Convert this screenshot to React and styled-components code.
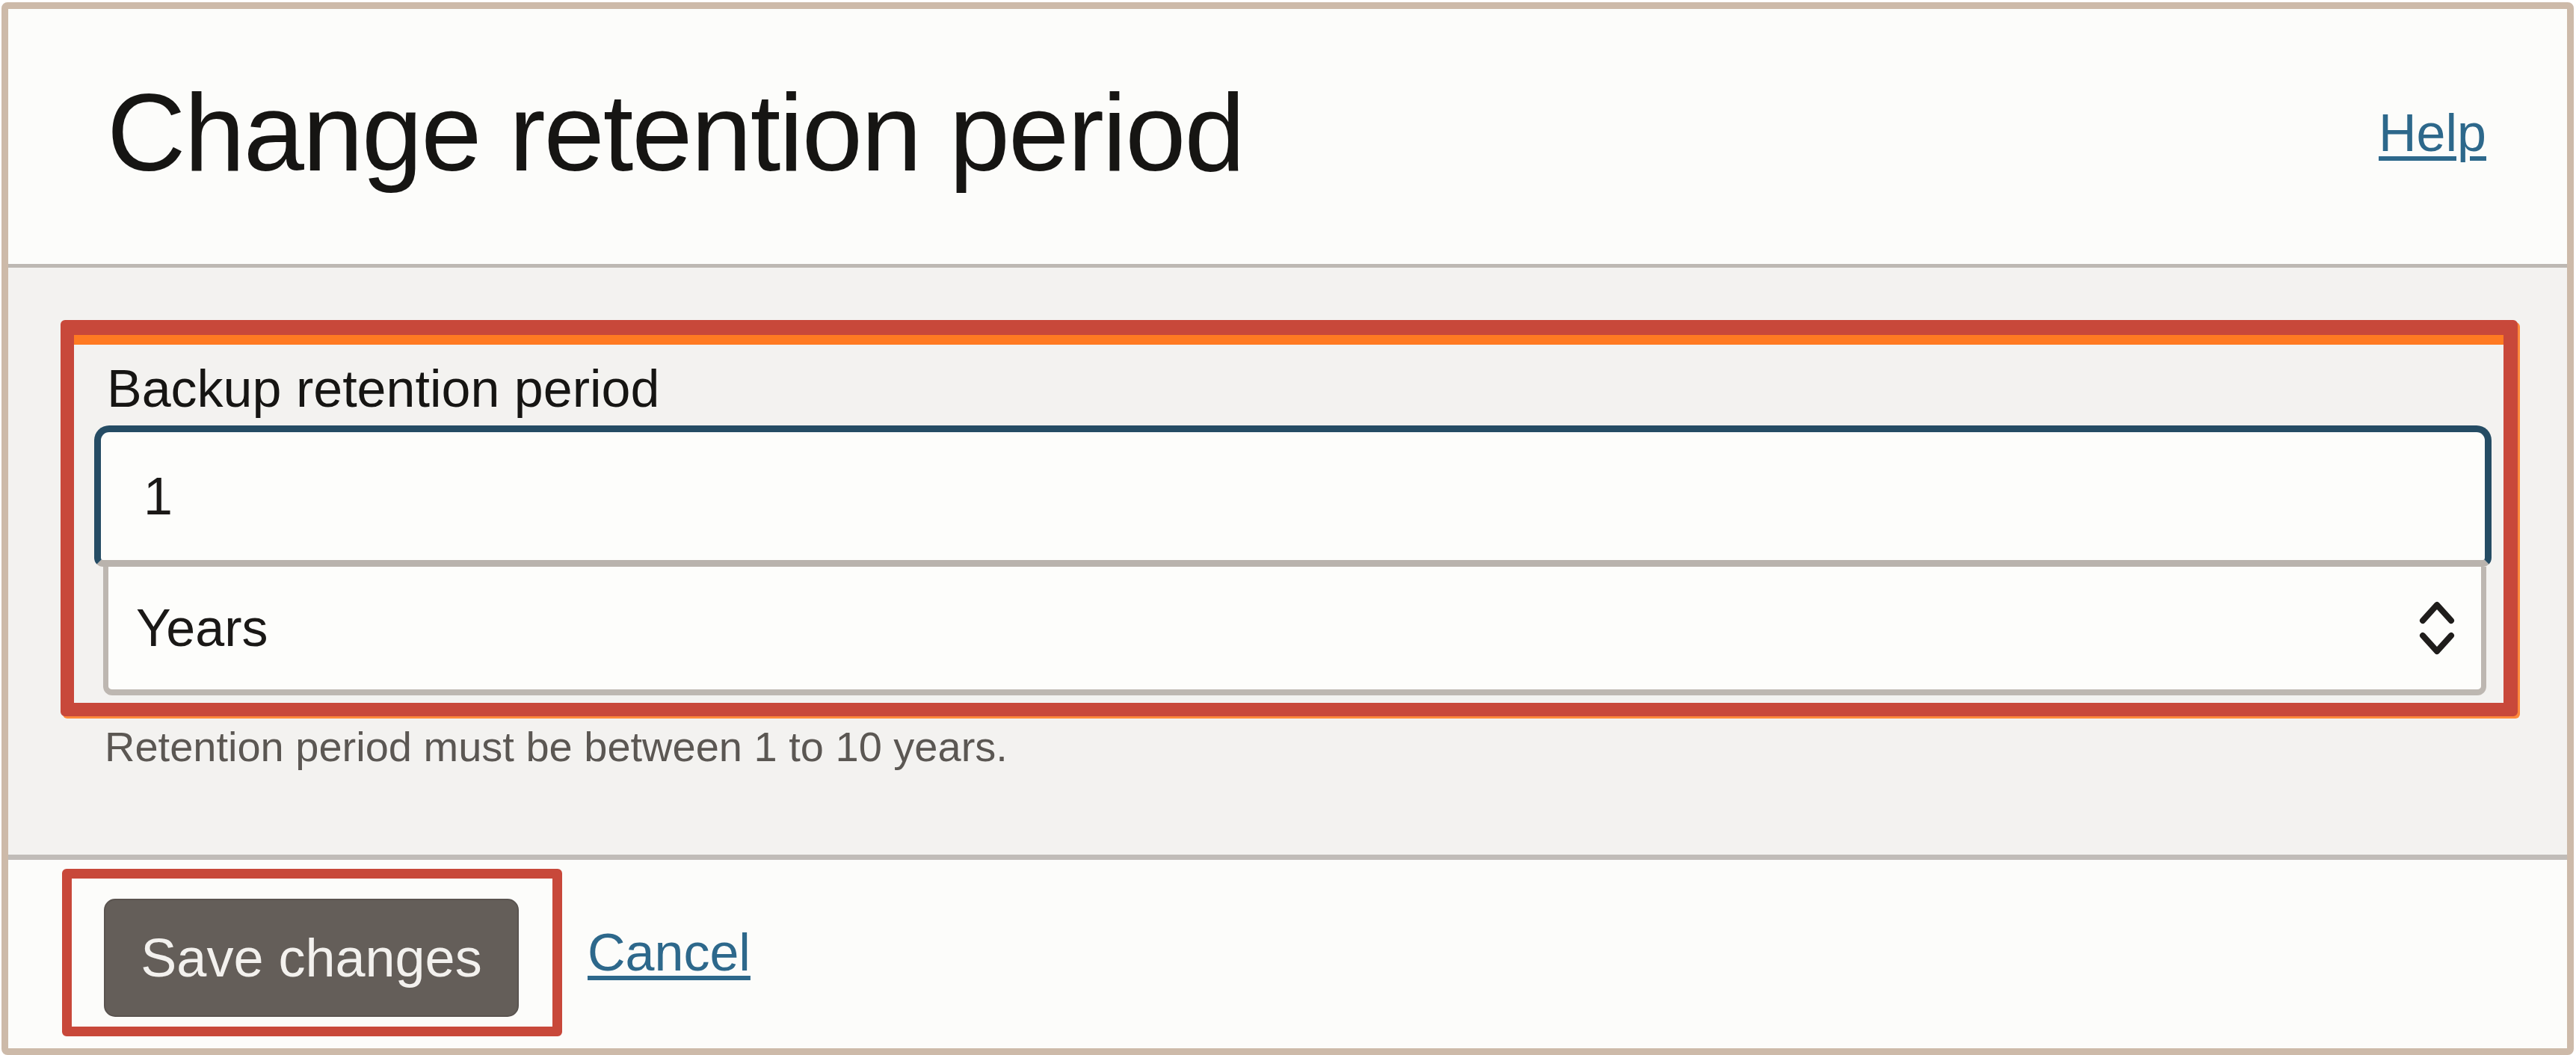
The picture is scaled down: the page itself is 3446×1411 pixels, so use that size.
import styled, { createGlobalStyle } from "styled-components";

const GlobalStyle = createGlobalStyle`
  html, body {
    margin: 0;
    padding: 0;
    background: #ffffff;
  }
  body {
    font-family: "Liberation Sans", Arial, sans-serif;
    color: #161513;
  }
`;

const Frame = styled.div`
  box-sizing: border-box;
  width: 3441px;
  height: 1408px;
  margin: 3px 0 0 2px;
  border: 9px solid #cdbaa9;
  border-radius: 8px;
  display: flex;
  flex-direction: column;
  overflow: hidden;
`;

const Header = styled.header`
  box-sizing: border-box;
  height: 346px;
  padding: 0 108px 10px 132px;
  background: #fcfcfa;
  border-bottom: 5px solid #bdb8b3;
  display: flex;
  align-items: center;
  justify-content: space-between;
`;

const Title = styled.h1`
  margin: 0;
  font-size: 146px;
  font-weight: 400;
  letter-spacing: -2px;
  line-height: 1.15;
  color: #161513;
`;

const TextLink = styled.a`
  font-size: 70px;
  color: #2d688b;
  text-decoration: underline;
  text-decoration-thickness: 6px;
  text-underline-offset: 7px;
  cursor: pointer;
`;

const Body = styled.section`
  background: #f3f2f0;
  padding: 70px 66px 109px 70px;
`;

// red annotation frame drawn round the highlighted parts
const Highlight = styled.div`
  box-sizing: border-box;
  border: ${(p) => (p.$thin ? "13px" : "18px")} solid #c8483a;
  border-top-width: ${(p) => (p.$thin ? "13px" : "20px")};
  border-right-width: ${(p) => (p.$thin ? "13px" : "19px")};
  border-radius: 6px;
  box-shadow: ${(p) =>
    p.$thin ? "none" : "inset 0 13px 0 #ff7a22, 3px 3px 0 #ff8a3c"};
  background: ${(p) => (p.$thin ? "#fcfcfa" : "#f3f2f0")};
  padding: ${(p) => p.$pad};
`;

const FieldLabel = styled.label`
  display: block;
  margin-left: 17px;
  font-size: 70px;
  line-height: 80px;
  color: #161513;
`;

const NumberInput = styled.input`
  display: block;
  box-sizing: border-box;
  width: 100%;
  height: 189px;
  margin: 9px 0 0;
  padding: 0 0 0 57px;
  border: 9px solid #254c64;
  border-bottom-color: #b9b3ad;
  border-radius: 20px 20px 12px 12px;
  background: #fdfdfb;
  font-family: "Liberation Sans", Arial, sans-serif;
  font-size: 70px;
  color: #1a1816;
  outline: none;
`;

const SelectBox = styled.div`
  box-sizing: border-box;
  height: 172px;
  margin: 0 7px 0 12px;
  padding: 0 35px 0 37px;
  border: 7px solid #bdb7b1;
  border-top: none;
  border-bottom-width: 8px;
  border-radius: 0 0 12px 12px;
  background: #fdfdfb;
  display: flex;
  align-items: center;
  justify-content: space-between;
  font-size: 70px;
  color: #1a1816;
`;

const Hint = styled.p`
  margin: 6px 0 0 59px;
  font-size: 56px;
  line-height: 70px;
  color: #5b5753;
`;

const Footer = styled.footer`
  flex: 1;
  background: #fcfcfa;
  border-top: 7px solid #c0bcb8;
  padding: 12px 0 0 72px;
  display: flex;
  align-items: flex-start;
`;

const ActionRow = styled.div`
  display: flex;
  align-items: center;
  gap: 34px;
`;

const PrimaryButton = styled.button`
  box-sizing: border-box;
  width: 555px;
  height: 158px;
  border: 2px solid #5a5450;
  border-radius: 15px;
  background: #645e59;
  color: #f3f1ee;
  font-family: "Liberation Sans", Arial, sans-serif;
  font-size: 72px;
  cursor: pointer;
`;

const Chevrons = () => (
  <svg width="48" height="80" viewBox="-4 -5 48 80" fill="none">
    <polyline
      points="1,25 20,4 39,25"
      stroke="#1f1d1b"
      strokeWidth="8"
      strokeLinecap="round"
      strokeLinejoin="round"
    />
    <polyline
      points="1,45 20,66 39,45"
      stroke="#1f1d1b"
      strokeWidth="8"
      strokeLinecap="round"
      strokeLinejoin="round"
    />
  </svg>
);

const App = () => {
  return (
    <>
      <GlobalStyle />
      <Frame>
        <Header>
          <Title>Change retention period</Title>
          <TextLink>Help</TextLink>
        </Header>
        <Body>
          <Highlight $pad="32px 16px 10px 27px">
            <FieldLabel htmlFor="retention">Backup retention period</FieldLabel>
            <NumberInput id="retention" type="text" readOnly defaultValue="1" />
            <SelectBox role="listbox">
              <span>Years</span>
              <Chevrons />
            </SelectBox>
          </Highlight>
          <Hint>Retention period must be between 1 to 10 years.</Hint>
        </Body>
        <Footer>
          <ActionRow>
            <Highlight $thin $pad="27px 45px 13px 43px">
              <PrimaryButton>Save changes</PrimaryButton>
            </Highlight>
            <TextLink>Cancel</TextLink>
          </ActionRow>
        </Footer>
      </Frame>
    </>
  );
};

export default App;
